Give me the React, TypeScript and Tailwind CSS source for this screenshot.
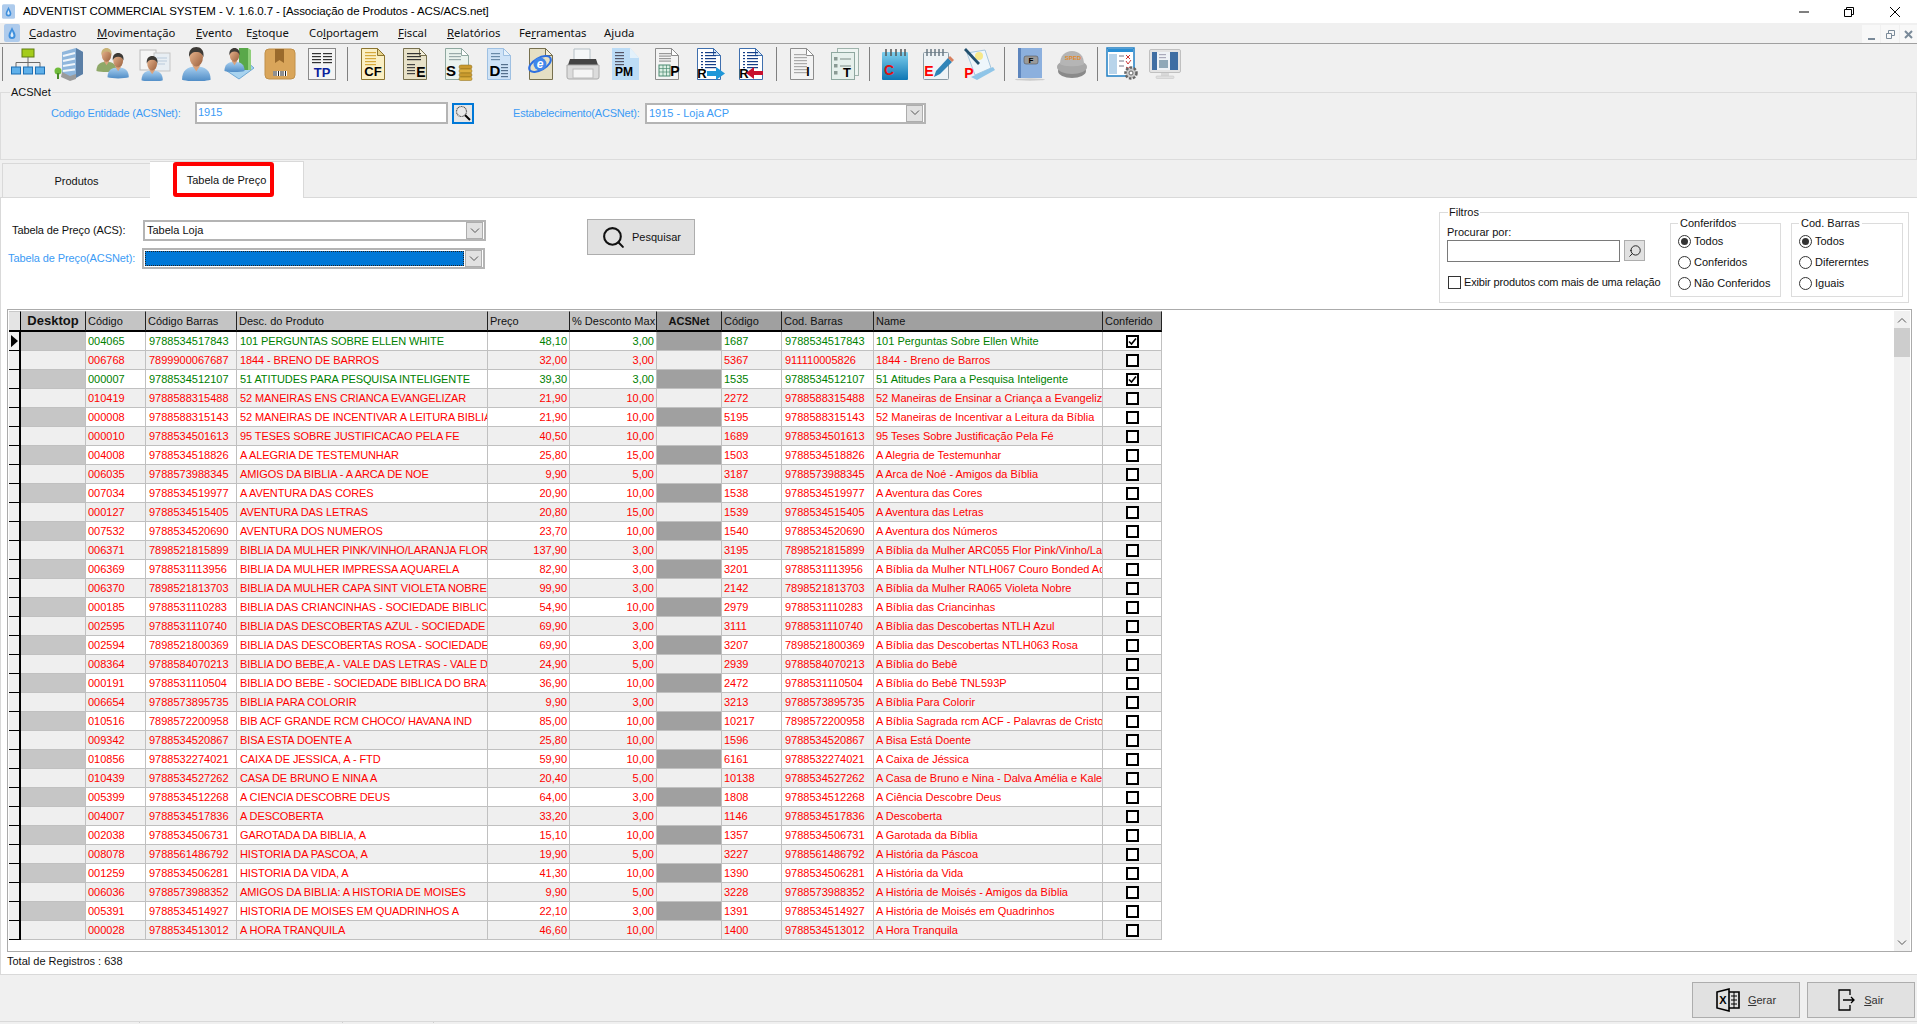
import type { ReactNode } from "react";
import { Search } from "lucide-react";

const SANS = "[font-family:'Liberation_Sans',Arial,sans-serif]";

type Row = [string, string, string, string, string, string, string, string, boolean];

const ROWS: Row[] = [
  ["004065", "9788534517843", "101 PERGUNTAS SOBRE ELLEN WHITE", "48,10", "3,00", "1687", "9788534517843", "101 Perguntas Sobre Ellen White", true],
  ["006768", "7899900067687", "1844 - BRENO DE BARROS", "32,00", "3,00", "5367", "911110005826", "1844 - Breno de Barros", false],
  ["000007", "9788534512107", "51 ATITUDES PARA PESQUISA INTELIGENTE", "39,30", "3,00", "1535", "9788534512107", "51 Atitudes Para a Pesquisa Inteligente", true],
  ["010419", "9788588315488", "52 MANEIRAS ENS CRIANCA EVANGELIZAR", "21,90", "10,00", "2272", "9788588315488", "52 Maneiras de Ensinar a Criança a Evangelizar", false],
  ["000008", "9788588315143", "52 MANEIRAS DE INCENTIVAR A LEITURA BIBLIA", "21,90", "10,00", "5195", "9788588315143", "52 Maneiras de Incentivar a Leitura da Bíblia", false],
  ["000010", "9788534501613", "95 TESES SOBRE JUSTIFICACAO PELA FE", "40,50", "10,00", "1689", "9788534501613", "95 Teses Sobre Justificação Pela Fé", false],
  ["004008", "9788534518826", "A ALEGRIA DE TESTEMUNHAR", "25,80", "15,00", "1503", "9788534518826", "A Alegria de Testemunhar", false],
  ["006035", "9788573988345", "AMIGOS DA BIBLIA - A ARCA DE NOE", "9,90", "5,00", "3187", "9788573988345", "A Arca de Noé - Amigos da Bíblia", false],
  ["007034", "9788534519977", "A AVENTURA DAS CORES", "20,90", "10,00", "1538", "9788534519977", "A Aventura das Cores", false],
  ["000127", "9788534515405", "AVENTURA DAS LETRAS", "20,80", "15,00", "1539", "9788534515405", "A Aventura das Letras", false],
  ["007532", "9788534520690", "AVENTURA DOS NUMEROS", "23,70", "10,00", "1540", "9788534520690", "A Aventura dos Números", false],
  ["006371", "7898521815899", "BIBLIA DA MULHER PINK/VINHO/LARANJA FLOR", "137,90", "3,00", "3195", "7898521815899", "A Bíblia da Mulher ARC055 Flor Pink/Vinho/Laranja", false],
  ["006369", "9788531113956", "BIBLIA DA MULHER IMPRESSA AQUARELA", "82,90", "3,00", "3201", "9788531113956", "A Bíblia da Mulher NTLH067 Couro Bonded Aquarela", false],
  ["006370", "7898521813703", "BIBLIA DA MULHER CAPA SINT VIOLETA NOBRE", "99,90", "3,00", "2142", "7898521813703", "A Bíblia da Mulher RA065 Violeta Nobre", false],
  ["000185", "9788531110283", "BIBLIA DAS CRIANCINHAS - SOCIEDADE BIBLICA DO BRASIL", "54,90", "10,00", "2979", "9788531110283", "A Bíblia das Criancinhas", false],
  ["002595", "9788531110740", "BIBLIA DAS DESCOBERTAS AZUL - SOCIEDADE BIBLICA", "69,90", "3,00", "3111", "9788531110740", "A Bíblia das Descobertas NTLH Azul", false],
  ["002594", "7898521800369", "BIBLIA DAS DESCOBERTAS ROSA - SOCIEDADE BIBLICA", "69,90", "3,00", "3207", "7898521800369", "A Bíblia das Descobertas NTLH063 Rosa", false],
  ["008364", "9788584070213", "BIBLIA DO BEBE,A - VALE DAS LETRAS - VALE DAS LETRAS", "24,90", "5,00", "2939", "9788584070213", "A Bíblia do Bebê", false],
  ["000191", "9788531110504", "BIBLIA DO BEBE - SOCIEDADE BIBLICA DO BRASIL", "36,90", "10,00", "2472", "9788531110504", "A Bíblia do Bebê TNL593P", false],
  ["006654", "9788573895735", "BIBLIA PARA COLORIR", "9,90", "3,00", "3213", "9788573895735", "A Bíblia Para Colorir", false],
  ["010516", "7898572200958", "BIB ACF GRANDE RCM CHOCO/ HAVANA IND", "85,00", "10,00", "10217", "7898572200958", "A Bíblia Sagrada rcm ACF - Palavras de Cristo", false],
  ["009342", "9788534520867", "BISA ESTA DOENTE A", "25,80", "10,00", "1596", "9788534520867", "A Bisa Está Doente", false],
  ["010856", "9788532274021", "CAIXA DE JESSICA, A - FTD", "59,90", "10,00", "6161", "9788532274021", "A Caixa de Jéssica", false],
  ["010439", "9788534527262", "CASA DE BRUNO E NINA A", "20,40", "5,00", "10138", "9788534527262", "A Casa de Bruno e Nina - Dalva Amélia e Kaleb", false],
  ["005399", "9788534512268", "A CIENCIA DESCOBRE DEUS", "64,00", "3,00", "1808", "9788534512268", "A Ciência Descobre Deus", false],
  ["004007", "9788534517836", "A DESCOBERTA", "33,20", "3,00", "1146", "9788534517836", "A Descoberta", false],
  ["002038", "9788534506731", "GAROTADA DA BIBLIA, A", "15,10", "10,00", "1357", "9788534506731", "A Garotada da Bíblia", false],
  ["008078", "9788561486792", "HISTORIA DA PASCOA, A", "19,90", "5,00", "3227", "9788561486792", "A História da Páscoa", false],
  ["001259", "9788534506281", "HISTORIA DA VIDA, A", "41,30", "10,00", "1390", "9788534506281", "A História da Vida", false],
  ["006036", "9788573988352", "AMIGOS DA BIBLIA: A HISTORIA DE MOISES", "9,90", "5,00", "3228", "9788573988352", "A História de Moisés - Amigos da Bíblia", false],
  ["005391", "9788534514927", "HISTORIA DE MOISES EM QUADRINHOS A", "22,10", "3,00", "1391", "9788534514927", "A História de Moisés em Quadrinhos", false],
  ["000028", "9788534513012", "A HORA TRANQUILA", "46,60", "10,00", "1400", "9788534513012", "A Hora Tranquila", false],
];

// desenhos da barra de ferramentas
function Ico({ children }: { children: ReactNode }) {
  return (
    <svg viewBox="0 0 34 34" className="h-[34px] w-[34px]">
      <defs>
        <linearGradient id="shirt" x1="0" y1="0" x2="0" y2="1">
          <stop offset="0" stopColor="#a9d0f0" />
          <stop offset="1" stopColor="#4f8cc6" />
        </linearGradient>
        <linearGradient id="skin" x1="0" y1="0" x2="1" y2="1">
          <stop offset="0" stopColor="#eebb94" />
          <stop offset="1" stopColor="#9a5f3c" />
        </linearGradient>
        <linearGradient id="pale" x1="0" y1="0" x2="0" y2="1">
          <stop offset="0" stopColor="#ffffff" />
          <stop offset="1" stopColor="#dcdcdc" />
        </linearGradient>
        <linearGradient id="note" x1="0" y1="0" x2="0" y2="1">
          <stop offset="0" stopColor="#7fd0ee" />
          <stop offset="1" stopColor="#0f77b4" />
        </linearGradient>
      </defs>
      {children}
    </svg>
  );
}

function Person({ x = 0, y = 0, s = 1, shirt = "url(#shirt)", hair = "#3d3a36" }: { x?: number; y?: number; s?: number; shirt?: string; hair?: string }) {
  return (
    <g transform={`translate(${x} ${y}) scale(${s})`}>
      <path d="M2 32c0-9 5-13 14-13s14 4 14 13c-6 2-22 2-28 0z" fill={shirt} />
      <path d="M12 18l4 6 4-6z" fill="#d9a27c" />
      <ellipse cx="16" cy="10" rx="6.5" ry="9" fill="url(#skin)" />
      <path d="M9 10c-1-7 3-10 7-10s8 3 7 10c-1-3-3-5-7-5s-6 2-7 5z" fill={hair} />
    </g>
  );
}

function Doc({ fill = "url(#pale)", stroke = "#8a8a8a", fold = "#ffffff" }: { fill?: string; stroke?: string; fold?: string }) {
  return (
    <>
      <path d="M5.5 1.5h16l7 7v24h-23z" fill={fill} stroke={stroke} />
      <path d="M21.5 1.5v7h7z" fill={fold} stroke={stroke} />
    </>
  );
}

function Lines({ x, y, w, n, color, step = 3 }: { x: number; y: number; w: number; n: number; color: string; step?: number }) {
  return (
    <>
      {Array.from({ length: n }, (_, i) => (
        <rect key={i} x={x} y={y + i * step} width={w} height="1.2" fill={color} />
      ))}
    </>
  );
}

function Tx({ x, y, size = 13, fill = "#000", children }: { x: number; y: number; size?: number; fill?: string; children: string }) {
  return (
    <text x={x} y={y} fontSize={size} fontWeight="700" fill={fill} fontFamily="'Liberation Sans', Arial, sans-serif" textAnchor="middle">
      {children}
    </text>
  );
}

const TOOLS: ReactNode[][] = [
  [
    <Ico key="org">
      <rect x="11" y="2" width="12" height="8" fill="#a4cc1c" stroke="#5f7d10" />
      <path d="M17 10v5M5 20v-4.500h24V20M17 15v5" fill="none" stroke="#6b6b6b" />
      <rect x="0.500" y="20" width="9" height="7" fill="#5fb0ea" stroke="#1d6fb3" />
      <rect x="12.500" y="20" width="9" height="7" fill="#5fb0ea" stroke="#1d6fb3" />
      <rect x="24.500" y="20" width="9" height="7" fill="#5fb0ea" stroke="#1d6fb3" />
    </Ico>,
    <Ico key="building">
      <path d="M9 5l14-4 7 4v22l-13 5-8-4z" fill="#8fb6dc" />
      <path d="M23 1l7 4v22l-7 4z" fill="#5b7fa6" />
      <path d="M10 9l12-3M10 14l12-2.500M10 19l12-2M10 24l12-1.500" stroke="#f0f6fb" strokeWidth="2" />
      <path d="M9 25l8 4 6-2v5l-6 2-9-4z" fill="#9a9a9a" />
      <circle cx="5" cy="24" r="3.500" fill="#6fbb3a" />
      <rect x="4" y="26" width="2" height="6" fill="#4a8a28" />
    </Ico>,
    <Ico key="users">
      <Person x={0} y={1} s={0.72} shirt="#8fa868" hair="#c9b377" />
      <Person x={11} y={6} s={0.76} />
    </Ico>,
    <Ico key="contact">
      <rect x="3" y="3" width="16" height="20" fill="#f5f5f5" stroke="#bbb" />
      <rect x="17" y="6" width="16" height="18" fill="#e8eef3" stroke="#c5c5c5" />
      <path d="M20 11h10M20 14h10M20 17h8" stroke="#b9cadb" />
      <Person x={3} y={9} s={0.76} />
    </Ico>,
    <Ico key="person">
      <Person x={1} y={0} s={1.02} />
    </Ico>,
    <Ico key="personbook">
      <path d="M6 24l18-11 9 8-15 11z" fill="#a8d3ef" stroke="#6fa8d4" />
      <path d="M18 1h9v22h-9z" fill="#59a84a" />
      <path d="M27 1l3 2v20l-3 0z" fill="#8fcf7a" />
      <Person x={2} y={1} s={0.72} />
    </Ico>,
    <Ico key="box">
      <rect x="2" y="2" width="30" height="30" rx="4" fill="#d9a55a" stroke="#c0904a" />
      <path d="M12 2h9v14l-4.500-3L12 16z" fill="#9a6a2c" />
      <rect x="10" y="24" width="14" height="5" fill="#fff" />
      <path d="M11 24v5M13 24v5M15.500 24v5M18 24v5M20 24v5M22.500 24v5" stroke="#222" />
    </Ico>,
    <Ico key="tp">
      <rect x="3.500" y="1.500" width="27" height="31" fill="#f4f4f4" stroke="#8a8a8a" />
      <Lines x={7} y={6} w={9} n={4} color="#333" />
      <Lines x={18} y={6} w={9} n={4} color="#333" />
      <Tx x={17} y={30} size={13} fill="#0a1f9c">TP</Tx>
    </Ico>,
  ],
  [
    <Ico key="cf">
      <Doc fill="#fbf0c4" stroke="#8c7530" fold="#e8d48a" />
      <Lines x={9} y={5} w={11} n={5} color="#d6a93c" />
      <Tx x={17} y={29} size={13}>CF</Tx>
    </Ico>,
    <Ico key="e">
      <Doc fill="#e8e2c9" stroke="#77704f" fold="#f5f0dc" />
      <Lines x={9} y={6} w={14} n={3} color="#333" />
      <Lines x={9} y={17} w={8} n={4} color="#444" />
      <Tx x={23} y={30} size={14}>E</Tx>
    </Ico>,
    <Ico key="s">
      <Doc fill="#eaf3ee" stroke="#8fa8a0" />
      <Lines x={9} y={6} w={12} n={3} color="#9aa" />
      <Tx x={11} y={29} size={15}>S</Tx>
      <rect x="19" y="18" width="13" height="4" rx="2" fill="#c99a2e" stroke="#8a6a16" strokeWidth="0.500" />
      <rect x="19" y="22" width="13" height="4" rx="2" fill="#dcae3e" stroke="#8a6a16" strokeWidth="0.500" />
      <rect x="19" y="26" width="13" height="4" rx="2" fill="#c99a2e" stroke="#8a6a16" strokeWidth="0.500" />
      <rect x="19" y="30" width="13" height="3.500" rx="1.500" fill="#dcae3e" stroke="#8a6a16" strokeWidth="0.500" />
    </Ico>,
    <Ico key="d">
      <Doc fill="#cfe3f7" stroke="#9ec0e2" fold="#e8f2fb" />
      <Lines x={9} y={6} w={9} n={3} color="#6a8aa8" />
      <Lines x={19} y={17} w={7} n={5} color="#55708c" />
      <Tx x={13} y={29} size={15}>D</Tx>
    </Ico>,
    <Ico key="ie">
      <Doc fill="#e5dfc4" stroke="#77704f" fold="#f5f0dc" />
      <ellipse cx="16" cy="17" rx="12" ry="6" fill="none" stroke="#2d6fe0" strokeWidth="2" transform="rotate(-30 16 17)" />
      <circle cx="16" cy="17" r="6.500" fill="#3f86ea" />
      <text x="16" y="21" fontSize="12" fontStyle="italic" fontWeight="700" fill="#fff" textAnchor="middle" fontFamily="'Liberation Sans', sans-serif">e</text>
    </Ico>,
    <Ico key="printer">
      <path d="M8 2h16v13H8z" fill="#f4f7f8" stroke="#b5c0c6" />
      <path d="M4 12h26l2 6H2z" fill="#444" />
      <path d="M1 18h32v12a2 2 0 0 1-2 2H3a2 2 0 0 1-2-2z" fill="#dcdcdc" stroke="#aaa" />
      <rect x="7" y="22" width="20" height="9" fill="#f5f5f5" stroke="#bbb" />
    </Ico>,
    <Ico key="pm">
      <path d="M4 1h18l9 10v22H4z" fill="#bcdcf6" />
      <path d="M22 1l9 10h-9z" fill="#e3f1fb" />
      <Lines x={7} y={5} w={9} n={5} color="#556" />
      <Tx x={16} y={29} size={12}>PM</Tx>
    </Ico>,
    <Ico key="p">
      <Doc fill="#f4f4f4" stroke="#8d8d8d" />
      <Lines x={9} y={6} w={12} n={4} color="#999" step={2.500} />
      <rect x="9" y="18" width="11" height="11" fill="#dcefe4" stroke="#4a8a70" />
      <path d="M9 21.500h11M9 25h11M13 18v11M16.500 18v11" stroke="#4a8a70" strokeWidth="0.700" />
      <Tx x={25} y={29} size={14}>P</Tx>
    </Ico>,
    <Ico key="rin">
      <Doc fill="#fff" stroke="#3f6fae" fold="#dbe8f6" />
      <Lines x={9} y={5} w={2} n={6} color="#163f87" />
      <Lines x={13} y={5} w={11} n={6} color="#163f87" />
      <Tx x={10} y={31} size={13}>R</Tx>
      <path d="M15 24h9v-4l9 6.500-9 6.500v-4h-9z" fill="#1f97d8" />
    </Ico>,
    <Ico key="rout">
      <Doc fill="#fff" stroke="#3f6fae" fold="#dbe8f6" />
      <Lines x={9} y={5} w={2} n={6} color="#163f87" />
      <Lines x={13} y={5} w={11} n={6} color="#163f87" />
      <Tx x={10} y={31} size={13}>R</Tx>
      <path d="M29 24h-9v-4l-8 6 8 6v-4h9z" fill="#c8102e" />
    </Ico>,
  ],
  [
    <Ico key="i">
      <Doc fill="#f3f3f3" stroke="#8d8d8d" />
      <Lines x={9} y={7} w={13} n={7} color="#aaa" />
      <Tx x={23} y={29} size={12}>I</Tx>
    </Ico>,
    <Ico key="t">
      <rect x="10.500" y="1.500" width="21" height="27" fill="#eef5f2" stroke="#9fb3ac" />
      <rect x="4.500" y="5.500" width="23" height="27" fill="#e6f0ec" stroke="#8fa8a0" />
      <rect x="7" y="10" width="3.500" height="3.500" fill="#8a9a94" />
      <rect x="7" y="17" width="3.500" height="3.500" fill="#8a9a94" />
      <rect x="7" y="24" width="3.500" height="3.500" fill="#8a9a94" />
      <path d="M13 12h11M13 19h11" stroke="#7a8a84" />
      <Tx x={20} y={30} size={13}>T</Tx>
    </Ico>,
  ],
  [
    <Ico key="c">
      <rect x="4" y="5" width="26" height="28" rx="1" fill="url(#note)" />
      <path d="M8 2v7M13 2v7M18 2v7M23 2v7M27 2v7" stroke="#555" strokeWidth="1.500" />
      <Tx x={11} y={28} size={14} fill="#e01010">C</Tx>
    </Ico>,
    <Ico key="en">
      <rect x="3.500" y="5.500" width="25" height="27" rx="1" fill="#eef3f6" stroke="#8a9aa4" />
      <path d="M7 2v7M11 2v7M15 2v7M19 2v7M23 2v7" stroke="#6a7a84" strokeWidth="1.500" />
      <Tx x={9} y={29} size={14} fill="#f00">E</Tx>
      <path d="M14 30l2-6 12-13 4 4-12 12z" fill="#2f84b8" />
      <path d="M28 11l2-2 4 4-2 2z" fill="#d88060" />
    </Ico>,
    <Ico key="pp">
      <path d="M5 6l18-3 6 18-16 7z" fill="#eef6fb" stroke="#a8c8de" />
      <path d="M9 30l22-10 2 3-18 10z" fill="#8fc5e8" />
      <circle cx="17" cy="9" r="4" fill="#f6e88a" />
      <path d="M4 1l14 15-2 2L2 3z" fill="#22506e" />
      <Tx x={7} y={31} size={14} fill="#f00">P</Tx>
    </Ico>,
  ],
  [
    <Ico key="f">
      <rect x="5" y="1" width="24" height="30" fill="#8cb0de" />
      <rect x="5" y="1" width="3" height="30" fill="#5d85bd" />
      <rect x="11" y="9" width="14" height="8" rx="2" fill="#9a9a9a" stroke="#444" strokeWidth="0.500" />
      <Tx x={18} y={16} size={8}>F</Tx>
      <ellipse cx="17" cy="32.500" rx="15" ry="1.200" fill="#ccc" />
    </Ico>,
    <Ico key="sped">
      <ellipse cx="17" cy="24" rx="14" ry="7" fill="#8a8a8a" />
      <ellipse cx="17" cy="20" rx="15" ry="7" fill="#a8a8a8" />
      <path d="M5 17c0-8 5-13 12-13s12 5 12 13c-3 3-21 3-24 0z" fill="#b5b5b5" />
      <text x="18" y="13" fontSize="6" fontWeight="700" fill="#e28a2c" textAnchor="middle" fontFamily="'Liberation Sans', sans-serif">SPED</text>
    </Ico>,
  ],
  [
    <Ico key="cfg">
      <rect x="1" y="1" width="27" height="28" fill="#fff" stroke="#1f7fc4" strokeWidth="1.500" />
      <rect x="2" y="2" width="25" height="3" fill="#2a8fd4" />
      <rect x="3" y="7" width="8" height="20" fill="#b8d4ea" />
      <path d="M13 9h5M13 14h5M13 19h5" stroke="#778" />
      <path d="M20 8l4 4M24 8l-4 4M20 14l2 3 3-4M20 20l4 3M24 20l-4 3" stroke="#c33" fill="none" />
      <circle cx="25" cy="26" r="5.500" fill="#c8c8c8" stroke="#666" strokeWidth="2.500" strokeDasharray="2.500 1.500" />
      <circle cx="25" cy="26" r="2" fill="#fff" stroke="#666" />
    </Ico>,
    <Ico key="mon">
      <rect x="1.500" y="2.500" width="31" height="23" rx="1.500" fill="#e4e4e4" stroke="#c0c0c0" />
      <rect x="4" y="5" width="26" height="18" fill="#3f6ea3" />
      <rect x="9" y="5" width="13" height="18" fill="#eef2f6" />
      <rect x="11" y="13" width="9" height="8" fill="#8fa8b8" />
      <Lines x={11} y={7} w={7} n={2} color="#aab" />
      <rect x="13" y="26" width="8" height="3" fill="#d8d8d8" />
      <rect x="8" y="29" width="18" height="2.500" rx="1" fill="#e0e0e0" stroke="#c0c0c0" strokeWidth="0.500" />
    </Ico>,
  ],
];

function AppIcon({ className }: { className: string }) {
  return (
    <svg viewBox="0 0 16 18" className={className}>
      <rect width="16" height="18" rx="2" fill="#aecbec" />
      <path d="M8 3c1 3 3.500 5.500 3.500 8.500a3.500 3.500 0 0 1-7 0C4.500 8.500 7 6 8 3z" fill="#3f8fdc" />
      <path d="M8 7c.5 2 1.500 3 1.500 4.500a1.500 1.500 0 0 1-3 0C6.500 10 7.500 9 8 7z" fill="#dcecfb" />
    </svg>
  );
}

function Menu({ w, children }: { w: string; children: ReactNode }) {
  return <span className={`${w} whitespace-nowrap`}>{children}</span>;
}

function Chevron({ className = "h-[8px] w-[10px] text-[#555]" }: { className?: string }) {
  return (
    <svg viewBox="0 0 10 8" className={className}>
      <path d="M1 1.500l4 4 4-4" fill="none" stroke="currentColor" strokeWidth="1" />
    </svg>
  );
}

function Select({ className, text, active }: { className: string; text?: string; active?: boolean }) {
  return (
    <div className={`flex items-center justify-between border-2 border-[#b4b4b4] bg-white pr-[1px] pl-[1px] ${className}`}>
      {active ? (
        <div className="mr-[1px] h-[15px] flex-1 border border-dotted border-[#222] bg-[#0078d7]" />
      ) : (
        <span className="flex-1 pl-[1px] leading-[15px]">{text}</span>
      )}
      <div className="flex h-[17px] w-[17px] items-center justify-center border border-[#adadad] bg-[#e1e1e1]">
        <Chevron />
      </div>
    </div>
  );
}

function Radio({ checked, label }: { checked?: boolean; label: string }) {
  return (
    <div className="flex h-[21px] items-center gap-[3px] pl-[7px]">
      <div className="flex h-[13px] w-[13px] items-center justify-center rounded-full border border-[#333] bg-white">
        {checked && <div className="h-[7px] w-[7px] rounded-full bg-[#333]" />}
      </div>
      <span className="whitespace-nowrap">{label}</span>
    </div>
  );
}

function Check({ on }: { on: boolean }) {
  return (
    <div className="mx-auto flex h-[13px] w-[13px] items-center justify-center border-2 border-black bg-white">
      {on && (
        <svg viewBox="0 0 9 9" className="h-[9px] w-[9px]">
          <path d="M1 4.500l2.500 2.500L8 1.500" fill="none" stroke="#000" strokeWidth="1.600" />
        </svg>
      )}
    </div>
  );
}

function HeadCell({ dark, bold, center, children }: { dark?: boolean; bold?: boolean; center?: boolean; children: ReactNode }) {
  return (
    <th
      className={`h-[21px] overflow-hidden whitespace-nowrap border-t border-r border-b-2 border-t-[#c8c8c8] border-r-[#222] border-b-black px-[2px] ${dark ? "bg-[#a0a0a0]" : "bg-[#c4c4c4]"} ${bold ? "font-bold" : "font-normal"} ${center ? "text-center" : "text-left"}`}
    >
      {children}
    </th>
  );
}

function GridTable() {
  return (
    <table className={`w-[1153px] table-fixed self-start border-separate border-spacing-0 text-[11px] leading-[14px] ${SANS}`}>
      <colgroup>
        <col className="w-[12px]" />
        <col className="w-[65px]" />
        <col className="w-[60px]" />
        <col className="w-[91px]" />
        <col className="w-[251px]" />
        <col className="w-[82px]" />
        <col className="w-[87px]" />
        <col className="w-[65px]" />
        <col className="w-[60px]" />
        <col className="w-[92px]" />
        <col className="w-[229px]" />
        <col className="w-[59px]" />
      </colgroup>
      <thead>
        <tr className="text-[#111]">
          <th className="h-[21px] border-t border-r border-b-2 border-t-[#c8c8c8] border-r-black border-b-black bg-[#e4e4e4]" />
          <HeadCell bold center>
            <span className="text-[13px]">Desktop</span>
          </HeadCell>
          <HeadCell>Código</HeadCell>
          <HeadCell>Código Barras</HeadCell>
          <HeadCell>Desc. do Produto</HeadCell>
          <HeadCell>Preço</HeadCell>
          <HeadCell>% Desconto Max</HeadCell>
          <HeadCell dark bold center>
            ACSNet
          </HeadCell>
          <HeadCell dark>Código</HeadCell>
          <HeadCell dark>Cod. Barras</HeadCell>
          <HeadCell dark>Name</HeadCell>
          <HeadCell dark>Conferido</HeadCell>
        </tr>
      </thead>
      <tbody>
        {ROWS.map((r, i) => {
          const odd = i % 2 === 0;
          const color = r[8] ? "text-[#008000]" : "text-[#ff0000]";
          const bg = odd ? "bg-white" : "bg-[#efefef]";
          const cell = `h-[19px] overflow-hidden whitespace-nowrap border-r border-b border-[#c0c0c0] pr-[2px] pl-[2px] ${bg} ${color}`;
          const wide = `h-[19px] overflow-hidden whitespace-nowrap border-r border-b border-[#c0c0c0] pr-[2px] pl-[3px] ${bg} ${color}`;
          return (
            <tr key={r[0]}>
              <td className="h-[19px] border-r-2 border-b border-black bg-[#f0f0f0] p-0">
                {i === 0 && (
                  <svg viewBox="0 0 8 14" className="ml-[2px] h-[14px] w-[7px]">
                    <path d="M0 0l8 7-8 7z" fill="#000" />
                  </svg>
                )}
              </td>
              <td className={`h-[19px] border-r border-b border-[#c0c0c0] ${odd ? "bg-[#c6c6c6]" : "bg-[#efefef]"}`} />
              <td className={cell}>{r[0]}</td>
              <td className={wide}>{r[1]}</td>
              <td className={`${wide} tracking-[-0.1px]`}>{r[2]}</td>
              <td className={`${cell} text-right`}>{r[3]}</td>
              <td className={`${cell} text-right`}>{r[4]}</td>
              <td className={`h-[19px] border-r border-b border-[#c0c0c0] ${odd ? "bg-[#a0a0a0]" : "bg-[#efefef]"}`} />
              <td className={cell}>{r[5]}</td>
              <td className={wide}>{r[6]}</td>
              <td className={cell}>{r[7]}</td>
              <td className={cell}>
                <Check on={r[8]} />
              </td>
            </tr>
          );
        })}
      </tbody>
    </table>
  );
}

export default function App() {
  return (
    <div className={`flex h-[1024px] w-[1917px] flex-col overflow-hidden bg-[#f0f0f0] text-[11px] text-[#111] ${SANS}`}>
      {/* barra de título */}
      <div className="flex h-[23px] items-center bg-white pl-[2px] text-[11.500px] text-black">
        <AppIcon className="h-[15px] w-[13px]" />
        <span className="ml-[8px] tracking-[-0.1px]">ADVENTIST COMMERCIAL SYSTEM - V. 1.6.0.7 - [Associação de Produtos - ACS/ACS.net]</span>
        <svg viewBox="0 0 10 10" className="ml-auto h-[10px] w-[10px]">
          <path d="M0 5h10" stroke="#000" />
        </svg>
        <svg viewBox="0 0 10 10" className="ml-[35px] h-[10px] w-[10px]">
          <path d="M.5 2.500h7v7h-7zM2.500 2.500V.5h7v7h-2" fill="none" stroke="#000" />
        </svg>
        <svg viewBox="0 0 10 10" className="mr-[17px] ml-[36px] h-[10px] w-[10px]">
          <path d="M0 0l10 10M10 0L0 10" stroke="#000" />
        </svg>
      </div>

      {/* menu */}
      <div className="flex h-[21px] items-center border-b border-[#a0a0a0] pl-[4px] font-['Noto_Sans',sans-serif] text-[11.300px] text-[#111]">
        <AppIcon className="h-[18px] w-[16px]" />
        <div className="ml-[9px] flex">
          <Menu w="w-[68px]"><u>C</u>adastro</Menu>
          <Menu w="w-[99px]"><u>M</u>ovimentação</Menu>
          <Menu w="w-[50px]"><u>E</u>vento</Menu>
          <Menu w="w-[63px]">E<u>s</u>toque</Menu>
          <Menu w="w-[89px]">Co<u>l</u>portagem</Menu>
          <Menu w="w-[49px]"><u>F</u>iscal</Menu>
          <Menu w="w-[72px]"><u>R</u>elatórios</Menu>
          <Menu w="w-[85px]">Fe<u>r</u>ramentas</Menu>
          <Menu w="w-[40px]">A<u>j</u>uda</Menu>
        </div>
        <div className="ml-auto flex h-[18px] gap-[1px] self-end">
          <div className="flex w-[18px] items-end justify-center bg-[#f8f8f8] pb-[3px]">
            <div className="h-[2px] w-[7px] bg-[#7a8a99]" />
          </div>
          <div className="flex w-[18px] items-center justify-center bg-[#f8f8f8]">
            <svg viewBox="0 0 9 9" className="h-[9px] w-[9px]">
              <path d="M.5 3.500h5v5h-5zM2.500 3V.5h6v5H6" fill="none" stroke="#7a8a99" />
            </svg>
          </div>
          <div className="flex w-[17px] items-center justify-center bg-[#f8f8f8]">
            <svg viewBox="0 0 9 9" className="h-[9px] w-[9px]">
              <path d="M1 1l7 7M8 1L1 8" stroke="#7a8a99" strokeWidth="2" />
            </svg>
          </div>
        </div>
      </div>

      {/* barra de ferramentas */}
      <div className="flex h-[41px] items-start pl-[2px] pt-[3px]">
        {TOOLS.map((group, gi) => (
          <div key={gi} className="flex">
            <div className={`h-[34px] w-px bg-[#808080] ${gi === 0 ? "mr-[4px]" : "mx-[4px]"}`} />
            {group.map((icon, i) => (
              <div key={i} className="flex w-[42px] justify-center">
                {icon}
              </div>
            ))}
          </div>
        ))}
      </div>

      {/* grupo ACSNet */}
      <fieldset className="h-[75px] border border-[#dcdcdc]">
        <legend className="ml-[9px] h-[14px] px-px leading-[14px] text-[#111]">ACSNet</legend>
        <div className="mt-[3px] flex h-[22px] items-center text-[#3c9bf5]">
          <span className="ml-[50px] w-[144px] whitespace-nowrap tracking-[-0.2px]">Codigo Entidade (ACSNet):</span>
          <div className="h-[22px] w-[253px] border-2 border-[#b4b4b4] bg-white pl-[1px] leading-[17px]">1915</div>
          <div className="ml-[4px] flex h-[21px] w-[22px] items-center justify-center border-2 border-[#0078d7] bg-[#e6e6e6]">
            <svg viewBox="0 0 16 16" className="h-[16px] w-[16px]">
              <circle cx="6.500" cy="6.500" r="5" fill="#e8e8e8" stroke="#555" strokeWidth="1.200" strokeDasharray="1 .6" />
              <path d="M10 10l5 5" stroke="#000" strokeWidth="2" />
            </svg>
          </div>
          <span className="ml-[39px] w-[132px] whitespace-nowrap tracking-[-0.2px]">Estabelecimento(ACSNet):</span>
          <Select className="h-[21px] w-[281px]" text="1915 - Loja ACP" />
        </div>
      </fieldset>

      {/* abas */}
      <div className="flex h-[38px] items-end border-b border-[#d9d9d9] pl-[2px]">
        <div className="flex h-[34px] w-[148px] items-center justify-center border-t border-l border-[#d9d9d9] bg-[#f0f0f0] pt-[1px]">Produtos</div>
        <div className="relative -mb-px flex h-[37px] w-[154px] items-start justify-center border-t border-r border-[#d9d9d9] bg-white pt-[10px]">
          Tabela de Preço
          <div className="absolute left-[23px] top-0 h-[35px] w-[101px] rounded-[3px] border-[4px] border-[#ff0000]" />
        </div>
      </div>

      {/* painel */}
      <div className="flex h-[777px] flex-col border-b border-l border-[#d9d9d9] bg-white">
        <div className="flex h-[111px]">
          <div className="w-[586px] pt-[22px]">
            <div className="flex items-center">
              <span className="w-[142px] pl-[11px] whitespace-nowrap tracking-[-0.1px]">Tabela de Preço (ACS):</span>
              <Select className="h-[21px] w-[343px]" text="Tabela Loja" />
            </div>
            <div className="mt-[7px] flex items-center">
              <span className="w-[141px] pl-[7px] whitespace-nowrap tracking-[-0.1px] text-[#3c9bf5]">Tabela de Preço(ACSNet):</span>
              <Select className="h-[21px] w-[343px]" active />
            </div>
          </div>
          <button className="mt-[21px] flex h-[36px] w-[108px] items-center justify-center gap-[6px] border border-[#adadad] bg-[#e1e1e1] text-[11px] text-[#111]">
            <Search className="h-[25px] w-[25px]" strokeWidth={2} />
            Pesquisar
          </button>
          <fieldset className="mt-[7px] mr-[8px] ml-auto flex h-[98px] w-[470px] border border-[#dcdcdc]">
            <legend className="ml-[8px] h-[14px] px-[1px] leading-[14px]">Filtros</legend>
            <div className="flex">
              <div className="w-[230px] pl-[7px]">
                <div className="mt-[6px] h-[14px] leading-[14px]">Procurar por:</div>
                <div className="mt-[1px] flex gap-[4px]">
                  <div className="h-[22px] w-[173px] border border-[#7a7a7a] bg-white" />
                  <div className="flex h-[21px] w-[21px] items-center justify-center border border-[#adadad] bg-[#e1e1e1]">
                    <Search className="h-[14px] w-[14px] -scale-x-100" strokeWidth={1.5} />
                  </div>
                </div>
                <div className="mt-[12px] flex items-center gap-[3px] pl-[1px]">
                  <div className="h-[13px] w-[13px] border border-[#333] bg-white" />
                  <span className="whitespace-nowrap tracking-[-0.15px]">Exibir produtos com mais de uma relação</span>
                </div>
              </div>
              <fieldset className="-mt-[3px] h-[81px] w-[111px] border border-[#dcdcdc]">
                <legend className="ml-[7px] h-[14px] px-[2px] leading-[14px]">Conferifdos</legend>
                <div className="pt-px">
                  <Radio checked label="Todos" />
                  <Radio label="Conferidos" />
                  <Radio label="Não Conferidos" />
                </div>
              </fieldset>
              <fieldset className="-mt-[3px] ml-[10px] h-[81px] w-[112px] border border-[#dcdcdc]">
                <legend className="ml-[7px] h-[14px] px-[2px] leading-[14px]">Cod. Barras</legend>
                <div className="pt-px">
                  <Radio checked label="Todos" />
                  <Radio label="Difererntes" />
                  <Radio label="Iguais" />
                </div>
              </fieldset>
            </div>
          </fieldset>
        </div>

        {/* grade */}
        <div className="ml-[6px] flex h-[643px] w-[1905px] justify-between border border-[#ababab] pt-px pl-px">
          <GridTable />
          <div className="mr-px flex h-[640px] w-[16px] flex-col bg-[#f0f0f0]">
            <div className="flex h-[17px] items-center justify-center">
              <Chevron className="h-[8px] w-[10px] rotate-180 text-[#555]" />
            </div>
            <div className="h-[29px] bg-[#cdcdcd]" />
            <div className="mt-auto flex h-[17px] items-center justify-center">
              <Chevron className="h-[8px] w-[10px] text-[#555]" />
            </div>
          </div>
        </div>
        <div className="mt-[2px] pl-[6px] leading-[14px] text-[#111]">Total de Registros : 638</div>
      </div>

      {/* rodapé */}
      <div className="flex h-[47px] items-start justify-end gap-[7px] border-b border-[#d9d9d9] pt-[7px] pr-[2px]">
        <button className="flex h-[36px] w-[108px] items-center justify-center gap-[8px] border border-[#adadad] bg-[#e1e1e1] text-[#333]">
          <svg viewBox="0 0 24 24" className="h-[24px] w-[24px]">
            <path d="M1 4l12-3v22L1 20z" fill="none" stroke="#000" strokeWidth="1.600" />
            <path d="M13 4h10v16H13" fill="none" stroke="#000" strokeWidth="1.600" />
            <path d="M15 8h6M15 12h6M15 16h6M18 4v16" stroke="#000" />
            <text x="7" y="16" fontSize="11" fontWeight="700" textAnchor="middle" fontFamily="'Liberation Sans', sans-serif">X</text>
          </svg>
          <span><u>G</u>erar</span>
        </button>
        <button className="flex h-[36px] w-[108px] items-center justify-center gap-[8px] border border-[#adadad] bg-[#e1e1e1] text-[#333]">
          <svg viewBox="0 0 18 24" className="h-[24px] w-[18px]">
            <path d="M12 7V2H1v20h11v-5" fill="none" stroke="#000" strokeWidth="1.300" />
            <path d="M5 12h11M13 9l3 3-3 3" fill="none" stroke="#000" strokeWidth="1.300" />
          </svg>
          <span><u>S</u>air</span>
        </button>
      </div>
      <div className="flex h-[1px]">
        <div className="w-[140px] border-r border-[#d0d0d0]" />
        <div className="w-[203px] border-r border-[#d0d0d0]" />
        <div className="w-[91px] border-r border-[#d0d0d0]" />
      </div>
    </div>
  );
}
